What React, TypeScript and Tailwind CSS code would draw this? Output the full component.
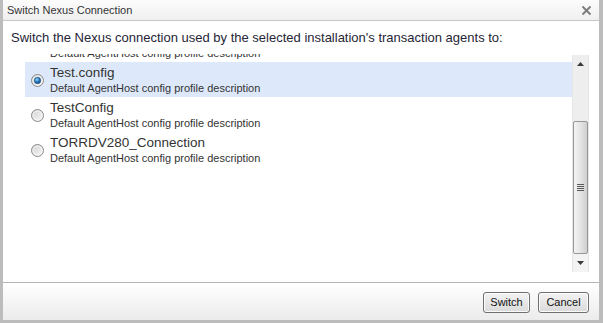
import React from "react";

const rows = [
  { name: "Default", selected: false },
  { name: "Test.config", selected: true },
  { name: "TestConfig", selected: false },
  { name: "TORRDV280_Connection", selected: false },
];

function Radio({ checked }: { checked: boolean }) {
  return (
    <svg width="13" height="13" viewBox="0 0 13 13" className="shrink-0">
      <defs>
        <linearGradient id={checked ? "rgc" : "rgu"} x1="0" y1="0" x2="1" y2="1">
          <stop offset="0" stopColor="#d2d2d2" />
          <stop offset="1" stopColor="#f8f8f8" />
        </linearGradient>
        <radialGradient id="dot" cx="0.4" cy="0.35" r="0.7">
          <stop offset="0" stopColor="#9fd6f5" />
          <stop offset="0.5" stopColor="#2b7fc4" />
          <stop offset="1" stopColor="#0d3f77" />
        </radialGradient>
      </defs>
      <circle cx="6.5" cy="6.5" r="6" fill={`url(#${checked ? "rgc" : "rgu"})`} stroke="#8a8b8b" strokeWidth="1" />
      <circle cx="6.5" cy="6.5" r="4.5" fill="none" stroke="#ffffff" strokeOpacity="0.6" strokeWidth="1" />
      {checked && <circle cx="6.5" cy="6.5" r="3.2" fill="url(#dot)" stroke="#1b4f85" strokeWidth="0.6" />}
    </svg>
  );
}

export default function App() {
  const font = { fontFamily: '"Liberation Sans", Arial, sans-serif' };
  return (
    <div className="w-[603px] h-[323px] bg-[#bcbcbc] pl-[3px] pr-[4px] pb-[3px] overflow-hidden" style={font}>
      <div className="flex flex-col h-full bg-white">
        {/* title bar */}
        <div className="h-[21px] shrink-0 flex items-center justify-between pl-[4px] pr-[7px] bg-gradient-to-b from-[#fcfcfc] to-[#efefef] border-b border-[#c6c6c6]">
          <span className="text-[11px] text-[#333]">Switch Nexus Connection</span>
          <svg width="11" height="11" viewBox="0 0 11 11">
            <path d="M1.5 1.5 L9.5 9.5 M9.5 1.5 L1.5 9.5" stroke="#7a7a7a" strokeWidth="1.8" />
          </svg>
        </div>
        {/* body */}
        <div className="flex-1 flex flex-col pl-[8px] pr-[10px]">
          <div className="mt-[9px] h-[16px] leading-[16px] text-[13px] text-[#262636]">
            Switch the Nexus connection used by the selected installation's transaction agents to:
          </div>
          <div className="mt-[8px] ml-[14px] h-[218px] flex">
            <div className="flex-1 overflow-hidden">
              <div className="-mt-[27px]">
                {rows.map((r, i) => (
                  <div
                    key={i}
                    className={`h-[35px] flex items-start ${r.selected ? "bg-[#dde9fb]" : ""}`}
                  >
                    <div className="w-[24px] h-full flex items-center justify-center pl-[1px] pt-[1px]">
                      {i > 0 && <Radio checked={r.selected} />}
                    </div>
                    <div className="flex flex-col pt-[2px] pl-[1px]">
                      <div className="h-[17px] leading-[17px] text-[13.5px] text-[#333]">{i > 0 ? r.name : ""}</div>
                      <div className="h-[14px] leading-[14px] text-[11px] text-[#333]">
                        Default AgentHost config profile description
                      </div>
                    </div>
                  </div>
                ))}
              </div>
            </div>
            {/* scrollbar */}
            <div className="w-[17px] mt-[1px] h-[217px] flex flex-col bg-[#eeeeee] border-x border-[#e6e6e6]">
              <div className="h-[17px] flex items-center justify-center">
                <svg width="7" height="4" viewBox="0 0 7 4"><path d="M0 4 L3.5 0 L7 4 Z" fill="#3a3a3a" /></svg>
              </div>
              <div className="h-[49px]" />
              <div className="h-[133px] rounded-[2px] border border-[#979797] bg-gradient-to-r from-[#f4f4f4] via-[#e4e4e4] to-[#cfcfcf] flex items-center justify-center">
                <svg width="7" height="8" viewBox="0 0 7 8">
                  <path d="M0 0.5 H7 M0 2.5 H7 M0 4.5 H7 M0 6.5 H7" stroke="#5a5a5a" strokeWidth="1" />
                </svg>
              </div>
              <div className="flex-1 flex items-center justify-center bg-[#f3f3f3]">
                <svg width="7" height="4" viewBox="0 0 7 4"><path d="M0 0 L7 0 L3.5 4 Z" fill="#3a3a3a" /></svg>
              </div>
            </div>
          </div>
        </div>
        {/* footer */}
        <div className="h-[38px] shrink-0 border-t border-[#b4b4b4] bg-gradient-to-b from-[#ffffff] to-[#ececec] flex items-center justify-end gap-[8px] pr-[10px] pt-[1px]">
          <button className="w-[47px] h-[21px] rounded-[3px] border border-[#707070] bg-gradient-to-b from-[#f3f3f3] to-[#dadada] text-[11px] text-[#111] shadow-[inset_0_0_0_1px_#fbfbfb]">
            Switch
          </button>
          <button className="w-[51px] h-[21px] rounded-[3px] border border-[#707070] bg-gradient-to-b from-[#f3f3f3] to-[#dadada] text-[11px] text-[#111] shadow-[inset_0_0_0_1px_#fbfbfb]">
            Cancel
          </button>
        </div>
      </div>
    </div>
  );
}
